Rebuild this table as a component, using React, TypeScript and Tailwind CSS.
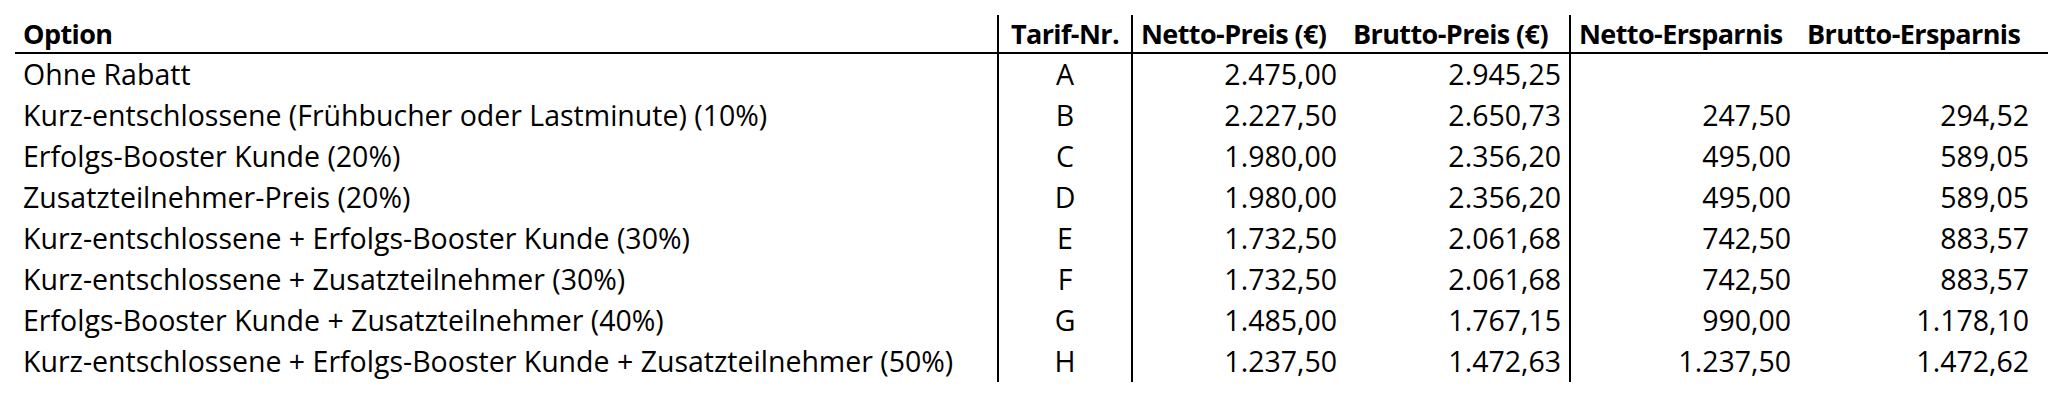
import React from 'react';

type Row = {
  option: string;
  tarif: string;
  netto: string;
  brutto: string;
  nettoSave: string;
  bruttoSave: string;
};

const rows: Row[] = [
  { option: 'Ohne Rabatt', tarif: 'A', netto: '2.475,00', brutto: '2.945,25', nettoSave: '', bruttoSave: '' },
  { option: 'Kurz-entschlossene (Frühbucher oder Lastminute) (10%)', tarif: 'B', netto: '2.227,50', brutto: '2.650,73', nettoSave: '247,50', bruttoSave: '294,52' },
  { option: 'Erfolgs-Booster Kunde (20%)', tarif: 'C', netto: '1.980,00', brutto: '2.356,20', nettoSave: '495,00', bruttoSave: '589,05' },
  { option: 'Zusatzteilnehmer-Preis (20%)', tarif: 'D', netto: '1.980,00', brutto: '2.356,20', nettoSave: '495,00', bruttoSave: '589,05' },
  { option: 'Kurz-entschlossene + Erfolgs-Booster Kunde (30%)', tarif: 'E', netto: '1.732,50', brutto: '2.061,68', nettoSave: '742,50', bruttoSave: '883,57' },
  { option: 'Kurz-entschlossene + Zusatzteilnehmer (30%)', tarif: 'F', netto: '1.732,50', brutto: '2.061,68', nettoSave: '742,50', bruttoSave: '883,57' },
  { option: 'Erfolgs-Booster Kunde + Zusatzteilnehmer (40%)', tarif: 'G', netto: '1.485,00', brutto: '1.767,15', nettoSave: '990,00', bruttoSave: '1.178,10' },
  { option: 'Kurz-entschlossene + Erfolgs-Booster Kunde + Zusatzteilnehmer (50%)', tarif: 'H', netto: '1.237,50', brutto: '1.472,63', nettoSave: '1.237,50', bruttoSave: '1.472,62' },
];

const cols = 'grid grid-cols-[982px_134px_214px_224px_230px_238px]';

export default function App() {
  return (
    <div className="w-[2048px] h-[401px] bg-white pl-[15px] pt-[13px] text-black font-['Open_Sans',sans-serif] leading-none">
      {/* header */}
      <div className={`${cols} h-[41px] pt-[2px] border-b-2 border-black font-bold text-[27px] tracking-[-0.6px]`}>
        <div className="flex items-center pl-2">Option</div>
        <div className="flex items-center justify-center border-l-2 border-black">Tarif-Nr.</div>
        <div className="flex items-center pl-2 border-l-2 border-black whitespace-nowrap">Netto-Preis (€)</div>
        <div className="flex items-center pl-2 whitespace-nowrap">Brutto-Preis (€)</div>
        <div className="flex items-center pl-2 border-l-2 border-black whitespace-nowrap">Netto-Ersparnis</div>
        <div className="flex items-center pl-2 whitespace-nowrap">Brutto-Ersparnis</div>
      </div>

      {rows.map((r) => (
        <div key={r.tarif} className={`${cols} h-[41px] text-[28.5px]`}>
          <div className="flex items-center pl-2 whitespace-nowrap">{r.option}</div>
          <div className="flex items-center justify-center border-l-2 border-black">{r.tarif}</div>
          <div className="flex items-center justify-end pr-2 border-l-2 border-black">{r.netto}</div>
          <div className="flex items-center justify-end pr-2">{r.brutto}</div>
          <div className="flex items-center justify-end pr-2 border-l-2 border-black">{r.nettoSave}</div>
          <div className="flex items-center justify-end pr-2">{r.bruttoSave}</div>
        </div>
      ))}
    </div>
  );
}
